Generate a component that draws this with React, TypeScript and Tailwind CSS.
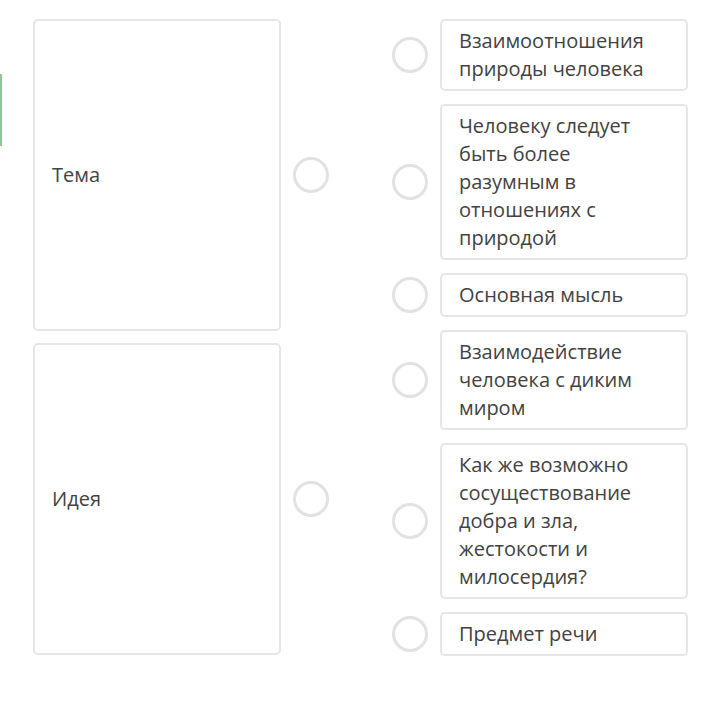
import React from 'react'

const leftItems = ['Тема', 'Идея']

const rightItems = [
  'Взаимоотношения природы человека',
  'Человеку следует быть более разумным в отношениях с природой',
  'Основная мысль',
  'Взаимодействие человека с диким миром',
  'Как же возможно сосуществование добра и зла, жестокости и милосердия?',
  'Предмет речи',
]

function Dot() {
  return <span className="block h-9 w-9 shrink-0 rounded-full border-[3px] border-[#e1e3e2] bg-white" />
}

export default function App() {
  return (
    <div
      className="flex h-[709px] w-[720px] items-start bg-white text-[20px] leading-[28px] text-[#424242]"
      style={{ fontFamily: '"Open Sans", "Noto Sans", sans-serif' }}
    >
      {/* edge of a side tab */}
      <div className="mt-[74px] h-[72px] w-[2px] bg-[#8fc79d]" />

      <div className="ml-[31px] mt-[19px] flex items-start">
        {/* left column */}
        <div className="flex flex-col gap-[12px]">
          {leftItems.map((label) => (
            <div key={label} className="flex h-[312px] items-center">
              <div className="flex h-full w-[248px] items-center rounded-[5px] border-2 border-[#e4e6e5] pl-[17px]">
                {label}
              </div>
              <div className="ml-[12px]">
                <Dot />
              </div>
            </div>
          ))}
        </div>

        {/* right column */}
        <div className="ml-[63px] flex flex-col gap-[13px]">
          {rightItems.map((text) => (
            <div key={text} className="flex items-center gap-[12px]">
              <Dot />
              <div className="w-[248px] rounded-[5px] border-2 border-[#e4e6e5] px-[17px] py-[6px]">
                {text}
              </div>
            </div>
          ))}
        </div>
      </div>
    </div>
  )
}
